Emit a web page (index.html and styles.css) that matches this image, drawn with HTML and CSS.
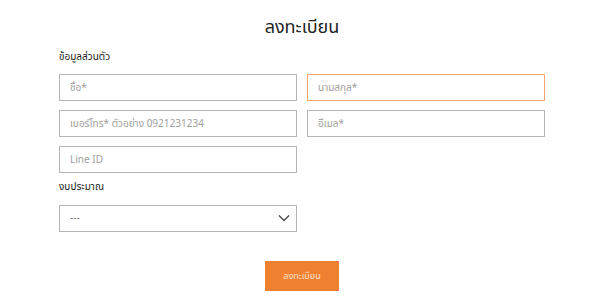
FILE: index.html
```html
<!DOCTYPE html>
<html lang="th">
  <head>
    <meta charset="utf-8" />
    <title>ลงทะเบียน</title>
    <link rel="stylesheet" href="styles.css">
  </head>
  <body>
    <main class="register">
      <h1>ลงทะเบียน</h1>
      <form class="form">
        <div class="section-label">ข้อมูลส่วนตัว</div>
        <div class="grid">
          <input class="field" type="text" placeholder="ชื่อ*">
          <input class="field active" type="text" placeholder="นามสกุล*">
          <input class="field" type="tel" placeholder="เบอร์โทร* ตัวอย่าง 0921231234">
          <input class="field" type="email" placeholder="อีเมล*">
          <input class="field" type="text" placeholder="Line ID">
        </div>
        <div class="section-label budget">งบประมาณ</div>
        <div class="select-wrap">
          <select class="field select">
            <option>---</option>
          </select>
          <svg class="chevron" width="12" height="8" viewBox="0 0 12 8">
            <path d="M1 1.5 L6 6.5 L11 1.5" fill="none" stroke="#444" stroke-width="1.3"/>
          </svg>
        </div>
        <div class="actions">
          <button type="button" class="submit">ลงทะเบียน</button>
        </div>
      </form>
    </main>
  </body>
</html>
```

FILE: styles.css
```css
body {
  margin: 0;
  background: #fff;
  font-family: "Noto Sans Thai", "Noto Sans", "DejaVu Sans", sans-serif;
  color: #222;
}
.register {
  width: 486px;
  margin: 0 auto;
  padding-left: 4px;
}
h1 {
  margin: 0;
  padding-top: 16px;
  height: 32px;
  font-size: 18px;
  font-weight: 400;
  text-align: center;
  line-height: 24px;
}
.section-label {
  font-size: 10px;
  line-height: 14px;
  height: 14px;
  margin-top: 2px;
  margin-bottom: 10px;
}
.section-label.budget {
  margin-top: 7px;
  margin-bottom: 10px;
}
.grid {
  display: grid;
  grid-template-columns: 238px 238px;
  column-gap: 10px;
  row-gap: 9px;
}
.field {
  box-sizing: border-box;
  width: 100%;
  height: 27px;
  border: 1px solid #b4b4b4;
  border-radius: 0;
  padding: 0 10px;
  font-family: inherit;
  font-size: 10px;
  color: #333;
  background: #fff;
  outline: none;
}
.field::placeholder {
  color: #a0a0a0;
}
.grid .field.active {
  border: 1px solid #f3a670;
}
.select-wrap {
  position: relative;
  width: 238px;
}
.select {
  appearance: none;
  color: #777;
}
.chevron {
  position: absolute;
  right: 7px;
  top: 10px;
  pointer-events: none;
}
.actions {
  display: flex;
  justify-content: center;
  margin-top: 29px;
}
.submit {
  width: 74px;
  height: 30px;
  border: none;
  background: #f08131;
  color: #fde3cf;
  font-family: inherit;
  font-size: 9px;
}
```
